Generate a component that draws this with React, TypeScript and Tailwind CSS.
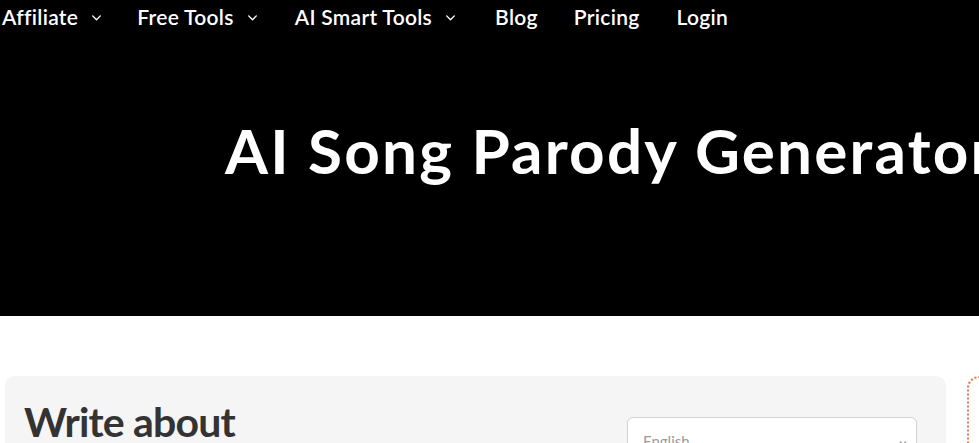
import React from "react";

function Chevron() {
  return (
    <svg width="13" height="13" viewBox="0 0 24 24" fill="none" stroke="currentColor" strokeWidth="2.6" strokeLinecap="round" strokeLinejoin="round" className="ml-[12px] mt-[2px]">
      <path d="M5 9l7 7 7-7" />
    </svg>
  );
}

export default function App() {
  const font = { fontFamily: "Lato, 'Noto Sans', sans-serif" };
  return (
    <div className="w-[979px] h-[443px] overflow-hidden bg-white" style={font}>
      <div className="bg-black h-[316px] flex flex-col overflow-hidden">
        <nav className="flex items-center h-[33px] pl-[2px] text-white text-[21px] font-semibold tracking-[0.3px]">
          <span className="flex items-center">Affiliate<Chevron /></span>
          <span className="flex items-center ml-[34px]">Free Tools<Chevron /></span>
          <span className="flex items-center ml-[36px]">AI Smart Tools<Chevron /></span>
          <span className="ml-[38px]">Blog</span>
          <span className="ml-[36px]">Pricing</span>
          <span className="ml-[37px]">Login</span>
        </nav>
        <h1 className="mt-[86px] pl-[225px] text-white text-[62px] font-bold leading-none whitespace-nowrap tracking-[2.2px]">
          AI Song Parody Generator
        </h1>
      </div>
      <div className="flex gap-[21px] pl-[5px] pt-[60px]">
        <div className="w-[941px] h-[120px] shrink-0 bg-[#f5f5f5] rounded-[10px] flex justify-between pl-[19px] pr-[29px] pt-[25px]">
          <h2 className="text-[41px] font-bold text-[#333333] leading-none tracking-[-0.8px]">Write about</h2>
          <div className="mt-[16px] w-[290px] h-[44px] bg-white border border-[#d4d4d4] rounded-[6px] flex items-start justify-between pl-[15px] pr-[8px] pt-[12px]">
            <span className="text-[15px] text-[#9a9a9a]">English</span>
            <svg width="10" height="10" viewBox="0 0 24 24" fill="none" stroke="#888" strokeWidth="3" className="mt-[8px]"><path d="M5 9l7 7 7-7" /></svg>
          </div>
        </div>
        <div className="w-[40px] h-[120px] shrink-0 border-2 border-dotted border-[#e0794f] rounded-[12px]" />
      </div>
    </div>
  );
}
